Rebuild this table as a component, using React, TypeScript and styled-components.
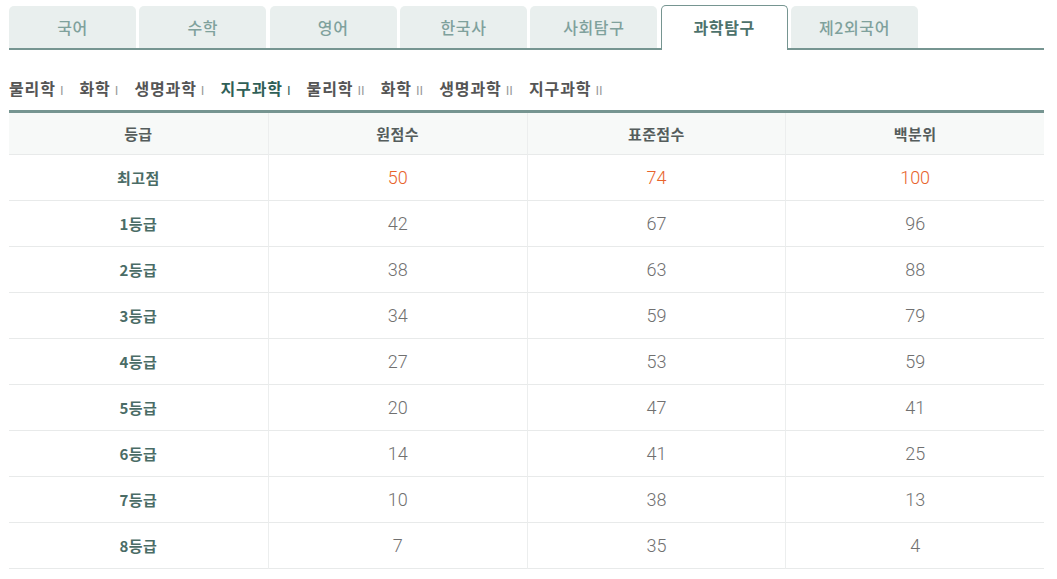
import React from "react";
import styled, { createGlobalStyle } from "styled-components";

const Global = createGlobalStyle`
  html, body { margin: 0; padding: 0; background: #fff; }
  body { font-family: "Noto Sans CJK KR", "Noto Sans", sans-serif; }
`;

const Page = styled.div`
  width: 1035px;
  margin: 0 0 0 9px;
  padding-top: 5px;
`;

const TabBar = styled.ul`
  list-style: none;
  margin: 0;
  padding: 0;
  display: flex;
  align-items: flex-end;
  gap: 3.33px;
  height: 43px;
  border-bottom: 2px solid #769591;
`;

const Tab = styled.li<{ $active?: boolean }>`
  box-sizing: border-box;
  width: 127px;
  flex: none;
  height: ${(p) => (p.$active ? "45px" : "42px")};
  margin-bottom: ${(p) => (p.$active ? "-2px" : "0")};
  display: flex;
  align-items: center;
  justify-content: center;
  padding-bottom: ${(p) => (p.$active ? "2px" : "0")};
  border-radius: 5px 5px 0 0;
  background: ${(p) => (p.$active ? "#fff" : "#e9efee")};
  border: ${(p) => (p.$active ? "1px solid #769591" : "none")};
  border-bottom: none;
  color: ${(p) => (p.$active ? "#4d726c" : "#7fa19c")};
  font-size: 16px;
  font-weight: ${(p) => (p.$active ? 700 : 500)};
  letter-spacing: 0.6px;
`;

const SubNav = styled.ul`
  list-style: none;
  margin: 0;
  padding: 15px 0 0;
  box-sizing: border-box;
  display: flex;
  gap: 16px;
  height: 60px;
  align-items: center;
`;

const SubItem = styled.li<{ $active?: boolean }>`
  font-size: 16px;
  font-weight: 700;
  letter-spacing: 0.9px;
  color: ${(p) => (p.$active ? "#2f5f57" : "#555")};
  white-space: nowrap;
`;

const Numeral = styled.span<{ $active?: boolean }>`
  margin-left: 4px;
  font-family: "Liberation Sans", sans-serif;
  font-weight: 400;
  font-size: 13px;
  letter-spacing: 0;
  color: ${(p) => (p.$active ? "#2f5f57" : "#9a9a9a")};
`;

const Table = styled.div`
  border-top: 3px solid #769591;
  display: grid;
  grid-template-columns: repeat(4, 1fr);
`;

const HeadCell = styled.div`
  height: 41px;
  display: flex;
  align-items: center;
  justify-content: center;
  background: #f7f9f8;
  border-bottom: 1px solid #e8eaea;
  border-left: 1px solid #eceeee;
  &:first-child { border-left: none; }
  font-size: 15px;
  font-weight: 700;
  color: #555d5c;
  letter-spacing: 0.4px;
`;

const Cell = styled.div<{ $first?: boolean; $top?: boolean }>`
  height: 45px;
  display: flex;
  align-items: center;
  justify-content: center;
  border-bottom: 1px solid #e8eaea;
  border-left: ${(p) => (p.$first ? "none" : "1px solid #eceeee")};
  font-family: ${(p) =>
    p.$first ? `"Noto Sans CJK KR", sans-serif` : `Roboto, "Liberation Sans", sans-serif`};
  font-size: ${(p) => (p.$first ? "15px" : "18px")};
  font-weight: ${(p) => (p.$first ? 700 : 300)};
  color: ${(p) => (p.$first ? "#4a6c66" : p.$top ? "#e8632b" : "#707070")};
  letter-spacing: ${(p) => (p.$first ? "0.4px" : "0")};
`;

const tabs = ["국어", "수학", "영어", "한국사", "사회탐구", "과학탐구", "제2외국어"];
const subs: [string, string][] = [
  ["물리학", "I"],
  ["화학", "I"],
  ["생명과학", "I"],
  ["지구과학", "I"],
  ["물리학", "II"],
  ["화학", "II"],
  ["생명과학", "II"],
  ["지구과학", "II"],
];
const rows: [string, number, number, number][] = [
  ["최고점", 50, 74, 100],
  ["1등급", 42, 67, 96],
  ["2등급", 38, 63, 88],
  ["3등급", 34, 59, 79],
  ["4등급", 27, 53, 59],
  ["5등급", 20, 47, 41],
  ["6등급", 14, 41, 25],
  ["7등급", 10, 38, 13],
  ["8등급", 7, 35, 4],
];

export default function App() {
  return (
    <Page>
      <Global />
      <TabBar>
        {tabs.map((t) => (
          <Tab key={t} $active={t === "과학탐구"}>
            {t}
          </Tab>
        ))}
      </TabBar>
      <SubNav>
        {subs.map(([n, r], i) => (
          <SubItem key={i} $active={i === 3}>
            {n}
            <Numeral $active={i === 3}>{r}</Numeral>
          </SubItem>
        ))}
      </SubNav>
      <Table>
        {["등급", "원점수", "표준점수", "백분위"].map((h) => (
          <HeadCell key={h}>{h}</HeadCell>
        ))}
        {rows.map((r, i) => (
          <React.Fragment key={r[0]}>
            <Cell $first>{r[0]}</Cell>
            <Cell $top={i === 0}>{r[1]}</Cell>
            <Cell $top={i === 0}>{r[2]}</Cell>
            <Cell $top={i === 0}>{r[3]}</Cell>
          </React.Fragment>
        ))}
      </Table>
    </Page>
  );
}
